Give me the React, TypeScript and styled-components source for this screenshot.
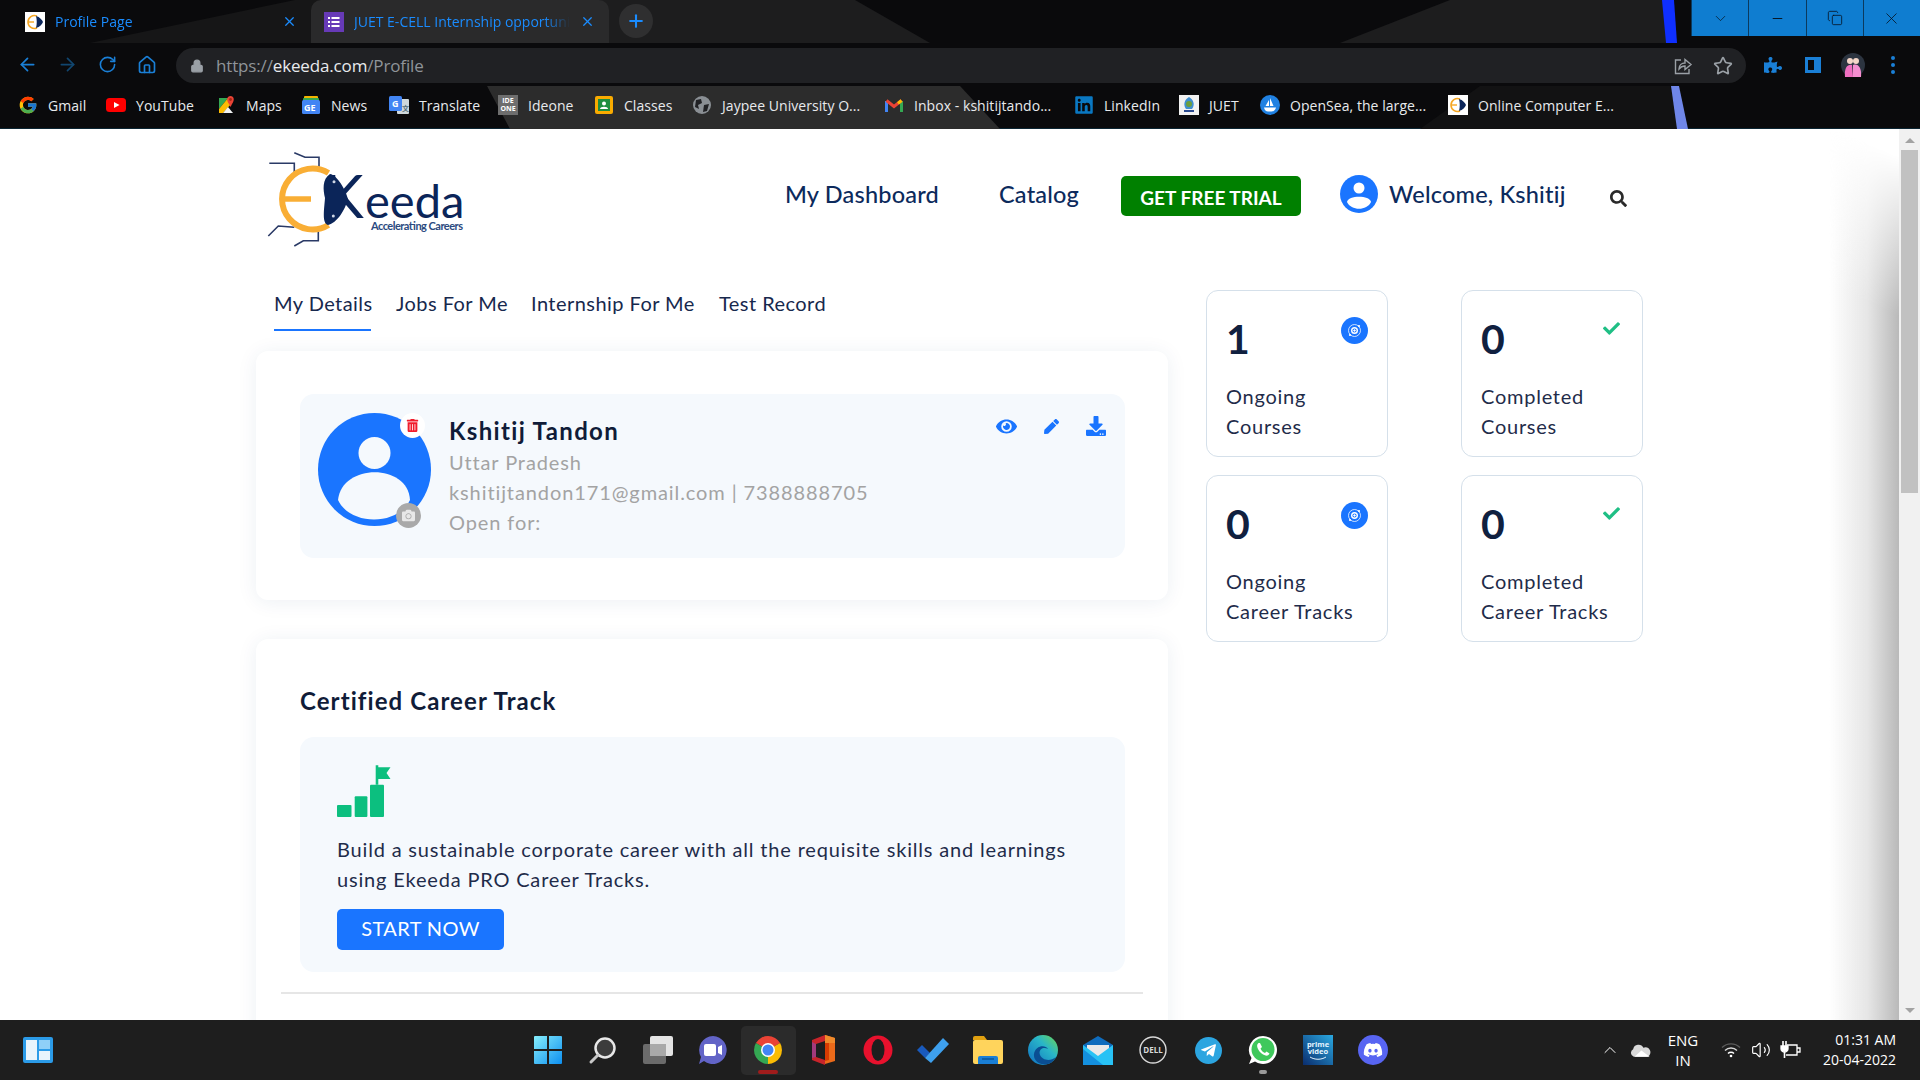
import styled, { createGlobalStyle } from "styled-components";
import {
  ArrowLeft,
  ArrowRight,
  ChevronDown,
  ChevronUp,
  Copy,
  Home,
  Lock,
  Minus,
  Plus,
  RotateCw,
  Star,
  Volume2,
  X,
} from "lucide-react";
import { FcGoogle } from "react-icons/fc";
import {
  FaCamera,
  FaCheck,
  FaDiscord,
  FaDownload,
  FaEye,
  FaLinkedin,
  FaPen,
  FaPuzzlePiece,
  FaSearch,
  FaTelegramPlane,
  FaTrashAlt,
} from "react-icons/fa";

const GlobalStyle = createGlobalStyle`
  html, body {
    margin: 0;
    padding: 0;
    overflow: hidden;
    background: #fff;
  }
  * {
    box-sizing: border-box;
  }
`;

const Screen = styled.div`
  width: 1920px;
  height: 1080px;
  display: flex;
  flex-direction: column;
  font-family: "Lato", "Open Sans", sans-serif;
  overflow: hidden;
`;

/* browser frame */

const Frame = styled.div`
  position: relative;
  height: 129px;
  flex: none;
  background: #0a0a0c;
  font-family: "Open Sans", sans-serif;
  border-bottom: 1px solid #0b2533;
`;

const Wallpaper = styled.svg`
  position: absolute;
  inset: 0;
`;

const TabStrip = styled.div`
  position: relative;
  height: 43px;
  display: flex;
  align-items: flex-start;
`;

const Tab = styled.div<{ $w: number; $pl: number; $open?: boolean }>`
  width: ${(p) => p.$w}px;
  height: 43px;
  padding-left: ${(p) => p.$pl}px;
  padding-right: 14px;
  display: flex;
  align-items: center;
  gap: 10px;
  border-radius: 10px 10px 0 0;
  background: ${(p) => (p.$open ? "#2a2a2b" : "transparent")};
  color: #1a8cff;
`;

const TabTitle = styled.span`
  flex: 1;
  font-size: 14px;
  white-space: nowrap;
  overflow: hidden;
  -webkit-mask-image: linear-gradient(to right, #000 88%, transparent);
  mask-image: linear-gradient(to right, #000 88%, transparent);
`;

const NewTab = styled.div`
  width: 34px;
  height: 34px;
  margin: 4px 0 0 10px;
  border-radius: 50%;
  background: #2f2f30;
  color: #1a8cff;
  display: flex;
  align-items: center;
  justify-content: center;
`;

const WindowButtons = styled.div`
  margin-left: auto;
  display: flex;
  height: 36px;
`;

const WindowButton = styled.div`
  width: 57.25px;
  height: 36px;
  background: #0f7dd0;
  border-left: 1px solid #0b3a5e;
  color: #06121f;
  display: flex;
  align-items: center;
  justify-content: center;
`;

const Toolbar = styled.div`
  position: relative;
  height: 43px;
  display: flex;
  align-items: center;
  color: #1a7fd6;
`;

const ToolIcon = styled.div<{ $w: number; $dim?: boolean; $ml?: number }>`
  width: ${(p) => p.$w}px;
  margin-left: ${(p) => p.$ml || 0}px;
  display: flex;
  justify-content: center;
  color: ${(p) => (p.$dim ? "#11466f" : "#1a7fd6")};
`;

const AddressBar = styled.div`
  width: 1570px;
  height: 35px;
  margin: 2px 0 0 9px;
  padding: 0 3px 0 14px;
  border-radius: 18px;
  background: #202124;
  display: flex;
  align-items: center;
  color: #9aa0a6;
`;

const UrlText = styled.span`
  margin-left: 12px;
  font-size: 17px;
  letter-spacing: -0.15px;
  color: #8f9499;
  flex: 1;
  b {
    font-weight: 400;
    color: #e8eaed;
  }
`;

const BookmarkBar = styled.div`
  position: relative;
  height: 43px;
  padding: 0 0 5px 18px;
  display: flex;
  align-items: center;
`;

const Bookmark = styled.div<{ $w: number }>`
  width: ${(p) => p.$w}px;
  display: flex;
  align-items: center;
  gap: 10px;
  color: #e8eaed;
  font-size: 14px;
  letter-spacing: 0.05px;
  white-space: nowrap;
`;

const Favicon = styled.div<{ $bg?: string }>`
  width: 20px;
  height: 20px;
  flex: none;
  display: flex;
  align-items: center;
  justify-content: center;
  background: ${(p) => p.$bg || "transparent"};
`;

const TinyLabel = styled.span`
  font-size: 7px;
  line-height: 8px;
  letter-spacing: 0;
  color: #fff;
  font-weight: 700;
  text-align: center;
  white-space: normal;
`;

/* page */

const Viewport = styled.div`
  position: relative;
  flex: 1;
  min-height: 0;
  display: flex;
`;

const Page = styled.div`
  position: relative;
  flex: 1;
  min-width: 0;
  overflow: hidden;
  background: #fff;
`;

const EdgeShade = styled.div`
  position: absolute;
  top: 0;
  right: 0;
  bottom: 0;
  width: 70px;
  pointer-events: none;
  background: linear-gradient(to left, #b9b9b9, #e6e6e6 45%, rgba(255, 255, 255, 0));
  -webkit-mask-image: linear-gradient(205deg, transparent 25px, #000 170px);
  mask-image: linear-gradient(205deg, transparent 25px, #000 170px);
`;

const ScrollTrack = styled.div`
  width: 21px;
  flex: none;
  background: #f1f1f1;
  display: flex;
  flex-direction: column;
  align-items: center;
  padding-top: 9px;
`;

const ArrowUp = styled.div`
  width: 0;
  height: 0;
  border-left: 5px solid transparent;
  border-right: 5px solid transparent;
  border-bottom: 5px solid #a3a3a3;
`;

const ArrowDown = styled(ArrowUp)`
  margin-top: auto;
  margin-bottom: 7px;
  transform: rotate(180deg);
`;

const ScrollThumb = styled.div`
  width: 17px;
  height: 343px;
  margin-top: 7px;
  background: #c1c1c1;
`;

const Header = styled.header`
  height: 161px;
  padding: 16px 0 0 262px;
  display: flex;
  align-items: flex-start;
`;

const Logo = styled.svg`
  flex: none;
  margin-right: 313px;
`;

const NavLink = styled.a<{ $w: number }>`
  width: ${(p) => p.$w}px;
  margin-top: 33px;
  flex: none;
  color: #0c2a5c;
  font-size: 23.5px;
  font-weight: 500;
  line-height: 32px;
  letter-spacing: 0.2px;
  white-space: nowrap;
`;

const TrialButton = styled.a`
  width: 180px;
  height: 40px;
  margin-top: 31px;
  padding-top: 2px;
  flex: none;
  border-radius: 5px;
  background: #008000;
  color: #fff;
  font-size: 19px;
  font-weight: 700;
  display: flex;
  align-items: center;
  justify-content: center;
`;

const UserIcon = styled.svg`
  margin: 30px 11px 0 39px;
  flex: none;
`;

const SearchIcon = styled.div`
  margin: 45px 0 0 45px;
  color: #2a2a2a;
  line-height: 0;
`;

const Columns = styled.div`
  padding-left: 256px;
  display: flex;
  gap: 38px;
  align-items: flex-start;
`;

const LeftColumn = styled.div`
  width: 912px;
  flex: none;
`;

const TabsRow = styled.div`
  height: 41px;
  margin-bottom: 20px;
  padding-left: 18px;
  display: flex;
  gap: 25px;
`;

const PageTab = styled.a<{ $active?: boolean; $w: number }>`
  width: ${(p) => p.$w}px;
  height: 41px;
  color: #17284d;
  font-size: 20px;
  line-height: 26px;
  letter-spacing: 0.45px;
  white-space: nowrap;
  border-bottom: 2px solid ${(p) => (p.$active ? "#1a75ff" : "transparent")};
`;

const Card = styled.section<{ $pt: number; $pb: number }>`
  margin-bottom: 39px;
  padding: ${(p) => p.$pt}px 43px ${(p) => p.$pb}px 44px;
  border-radius: 12px;
  background: #fff;
  box-shadow: 0 2px 20px rgba(30, 60, 110, 0.08);
`;

const Panel = styled.div`
  border-radius: 14px;
  background: #f5f9fd;
`;

const ProfilePanel = styled(Panel)`
  height: 164px;
  padding: 19px 17px 0 18px;
  display: flex;
  align-items: flex-start;
`;

const AvatarWrap = styled.div`
  position: relative;
  width: 113px;
  height: 113px;
  flex: none;
`;

const Badge = styled.div<{ $bg: string; $color: string; $bottom?: boolean }>`
  position: absolute;
  width: 25px;
  height: 25px;
  left: 82px;
  ${(p) => (p.$bottom ? "left: 78px; top: 90px;" : "top: 0;")}
  border-radius: 50%;
  background: ${(p) => p.$bg};
  color: ${(p) => p.$color};
  display: flex;
  align-items: center;
  justify-content: center;
`;

const Info = styled.div`
  margin: 4px 0 0 18px;
  flex: 1;
`;

const Name = styled.div`
  margin-bottom: 2px;
  font-size: 24px;
  line-height: 28px;
  font-weight: 700;
  color: #101c38;
  letter-spacing: 1.35px;
`;

const Muted = styled.div`
  font-size: 20px;
  line-height: 30px;
  color: #a3a3a3;
  letter-spacing: 0.9px;
`;

const Actions = styled.div`
  display: flex;
  gap: 21px;
  padding-top: 1px;
  color: #1a75ff;
`;

const ActionIcon = styled.div`
  width: 24px;
  height: 24px;
  display: flex;
  align-items: center;
  justify-content: center;
`;

const SectionTitle = styled.h2`
  margin: 0 0 22px;
  font-size: 24px;
  line-height: 28px;
  font-weight: 700;
  color: #101c38;
  letter-spacing: 1.08px;
`;

const TrackPanel = styled(Panel)`
  height: 235px;
  padding: 28px 37px 0;
`;

const TrackIcon = styled.svg`
  display: block;
  margin-bottom: 17px;
`;

const TrackText = styled.p`
  margin: 0;
  width: 760px;
  color: #1f2c4a;
  font-size: 20px;
  line-height: 30px;
  letter-spacing: 0.82px;
`;

const StartButton = styled.a`
  width: 167px;
  height: 41px;
  margin-top: 15px;
  padding-bottom: 3px;
  border-radius: 5px;
  background: #1a75ff;
  color: #fff;
  font-size: 20px;
  letter-spacing: 0.4px;
  display: flex;
  align-items: center;
  justify-content: center;
`;

const Divider = styled.hr`
  width: 862px;
  height: 2px;
  margin: 20px 0 0 -19px;
  border: 0;
  background: #e6e6e6;
`;

const StatGrid = styled.div`
  display: grid;
  grid-template-columns: 182px 182px;
  column-gap: 73px;
  row-gap: 18px;
`;

const StatCard = styled.div`
  height: 167px;
  padding: 23px 19px 0;
  border: 1px solid #d5e0ea;
  border-radius: 12px;
  background: #fff;
`;

const StatTop = styled.div`
  display: flex;
  justify-content: space-between;
  align-items: flex-start;
  height: 50px;
  margin-bottom: 17px;
`;

const StatNumber = styled.div`
  font-size: 41px;
  line-height: 50px;
  font-weight: 700;
  color: #10203f;
`;

const StatIconCircle = styled.div`
  width: 27px;
  height: 27px;
  margin: 3px 0 0 0;
  border-radius: 50%;
  background: #1a75ff;
  color: #fff;
  display: flex;
  align-items: center;
  justify-content: center;
`;

const StatCheck = styled.div`
  margin: 6px 3px 0 0;
  color: #1fbf85;
  line-height: 0;
`;

const StatLabel = styled.div`
  color: #1f2c4a;
  font-size: 20px;
  line-height: 30px;
  letter-spacing: 0.75px;
  white-space: nowrap;
`;

/* taskbar */

const Taskbar = styled.div`
  height: 60px;
  flex: none;
  background: #1e1e1e;
  display: grid;
  grid-template-columns: 1fr auto 1fr;
  align-items: center;
  color: #fff;
  font-family: "Open Sans", sans-serif;
`;

const Widgets = styled.div`
  padding-left: 23px;
  line-height: 0;
`;

const TaskIcons = styled.div`
  display: flex;
  margin-left: 1px;
`;

const TaskSlot = styled.div<{ $active?: boolean; $running?: boolean }>`
  position: relative;
  width: 55px;
  height: 49px;
  display: flex;
  align-items: center;
  justify-content: center;
  border-radius: 5px;
  background: ${(p) => (p.$active ? "#2b2b2b" : "transparent")};
  &::after {
    content: "";
    display: ${(p) => (p.$active || p.$running ? "block" : "none")};
    position: absolute;
    bottom: 1px;
    left: 50%;
    width: ${(p) => (p.$active ? 20 : 8)}px;
    height: 4px;
    margin-left: ${(p) => (p.$active ? -10 : -4)}px;
    border-radius: 2px;
    background: ${(p) => (p.$active ? "#a01c1c" : "#9a9a9a")};
  }
`;

const Tray = styled.div`
  display: flex;
  align-items: center;
  justify-content: flex-end;
  padding-right: 24px;
  font-size: 14px;
  line-height: 20px;
`;

const TrayIcon = styled.div<{ $w: number }>`
  width: ${(p) => p.$w}px;
  display: flex;
  justify-content: center;
  line-height: 0;
`;

const TrayLang = styled.div`
  width: 54px;
  margin: 0 6px 0 1px;
  font-size: 15px;
  text-align: center;
`;

const Clock = styled.div`
  width: 90px;
  text-align: right;
`;

const ProfileFavicon = () => (
  <Favicon $bg="#fff">
    <svg width="18" height="18" viewBox="0 0 18 18">
      <path d="M11 3A6.5 6.5 0 1 0 11 15" fill="none" stroke="#f5a623" strokeWidth="1.6" />
      <path d="M2 9H8" stroke="#f5a623" strokeWidth="1.4" />
      <path d="M10 3C14 4 16 7 17 9C16 11 14 14 10 15C11 11 11 7 10 3Z" fill="#0b2559" />
    </svg>
  </Favicon>
);

const FormsFavicon = () => (
  <Favicon $bg="#673ab7">
    <svg width="14" height="14" viewBox="0 0 14 14" fill="#fff">
      <rect x="1" y="2" width="2" height="2" />
      <rect x="4.5" y="2" width="8" height="2" />
      <rect x="1" y="6" width="2" height="2" />
      <rect x="4.5" y="6" width="8" height="2" />
      <rect x="1" y="10" width="2" height="2" />
      <rect x="4.5" y="10" width="8" height="2" />
    </svg>
  </Favicon>
);

const YoutubeIcon = () => (
  <svg width="20" height="14" viewBox="0 0 20 14">
    <rect width="20" height="14" rx="3.5" fill="#f00" />
    <path d="M8 4L13.5 7L8 10Z" fill="#fff" />
  </svg>
);

const GmailIcon = () => (
  <svg width="18" height="14" viewBox="0 0 18 14" fill="none" strokeWidth="3">
    <path d="M1.5 14V3" stroke="#4285f4" />
    <path d="M16.5 14V3" stroke="#34a853" />
    <path d="M1.5 2.5L9 8.5L16.5 2.5" stroke="#ea4335" />
    <path d="M16.5 2.5L13 5.3" stroke="#fbbc04" />
  </svg>
);

const MapsIcon = () => (
  <svg width="20" height="20" viewBox="0 0 20 20">
    <path d="M3 3H12L3 14Z" fill="#34a853" />
    <path d="M3 14L12 3L16 8L7 18H3Z" fill="#fbbc04" />
    <path d="M7 18L12 12L17 18Z" fill="#f1f3f4" />
    <path d="M13 9C10 5 11 1 14.5 1S19 5 16 9L14.5 12Z" fill="#ea4335" />
    <circle cx="14.5" cy="4.5" r="1.4" fill="#a52714" />
  </svg>
);

const NewsIcon = () => (
  <svg width="20" height="20" viewBox="0 0 20 20">
    <rect x="3" y="1" width="14" height="6" rx="1" fill="#f4b400" />
    <rect x="2" y="3" width="16" height="4" rx="1" fill="#34a853" />
    <rect x="1" y="5" width="18" height="14" rx="1.5" fill="#4285f4" />
    <text x="3" y="16" fontSize="9" fontWeight="700" fill="#fff" fontFamily="Open Sans">
      GE
    </text>
  </svg>
);

const TranslateIcon = () => (
  <svg width="20" height="20" viewBox="0 0 20 20">
    <rect x="8" y="4" width="12" height="15" rx="1" fill="#cfd8dc" />
    <rect x="0" y="1" width="13" height="15" rx="1.5" fill="#4285f4" />
    <text x="3" y="12" fontSize="9" fontWeight="700" fill="#fff" fontFamily="Open Sans">
      G
    </text>
    <text x="13" y="16" fontSize="7" fontWeight="700" fill="#546e7a" fontFamily="Noto Sans CJK SC">
      文
    </text>
  </svg>
);

const ClassesIcon = () => (
  <svg width="20" height="20" viewBox="0 0 20 20">
    <rect x="1" y="1" width="18" height="18" rx="2" fill="#f9ab00" />
    <rect x="4" y="4" width="12" height="12" fill="#1e8e3e" />
    <circle cx="10" cy="8.5" r="2" fill="#fff" />
    <path d="M6 14C6 11 14 11 14 14Z" fill="#fff" />
  </svg>
);

const GlobeIcon = () => (
  <svg width="20" height="20" viewBox="0 0 20 20">
    <circle cx="10" cy="10" r="9" fill="#8a8f94" />
    <path d="M4 5L9 4L10 8L6 10L7 14L3 12Z" fill="#202124" />
    <path d="M12 10L17 9L15 16L11 17Z" fill="#202124" />
  </svg>
);

const JuetIcon = () => (
  <Favicon $bg="#f2f2f2">
    <svg width="16" height="18" viewBox="0 0 16 18">
      <path d="M8 1C13 4 14 9 11 13H5C2 9 3 4 8 1Z" fill="#3f8fd0" />
      <circle cx="8" cy="8" r="3" fill="#6c9e3c" />
      <rect x="3" y="14" width="10" height="2" fill="#2a4a90" />
    </svg>
  </Favicon>
);

const OpenSeaIcon = () => (
  <svg width="20" height="20" viewBox="0 0 20 20">
    <circle cx="10" cy="10" r="10" fill="#2081e2" />
    <path d="M10 3L13.5 11H10ZM9 5V11H5.5Z" fill="#fff" />
    <path d="M4 12.5H16C15 16 13 16.5 11 16.5H8C6 16.5 4.5 15 4 12.5Z" fill="#fff" />
  </svg>
);

const ShareIcon = () => (
  <svg width="20" height="20" viewBox="0 0 20 20" fill="none" stroke="#9aa0a6" strokeWidth="1.4">
    <path d="M8 4H2.5V17.5H16V13" />
    <path d="M6 13C6 9 9 7 12 7V3.5L18 8.5L12 13.5V10C10 10 7.5 11 6 13Z" />
  </svg>
);

const SidePanelIcon = () => (
  <svg width="18" height="20" viewBox="0 0 18 20">
    <rect x="1" y="2" width="16" height="16" fill="#1a7fd6" />
    <rect x="4" y="5" width="6" height="10" fill="#0a0a0c" />
  </svg>
);

const ProfileAvatar = () => (
  <svg width="24" height="28" viewBox="0 0 24 28">
    <circle cx="12" cy="14" r="12" fill="#2c3440" />
    <path d="M4 26C3 16 7 13 11 14L12 26Z" fill="#f06fc0" />
    <path d="M12 26V14C17 12 21 17 20 26Z" fill="#f58ed0" />
    <circle cx="9" cy="10" r="3" fill="#f4d6c8" />
    <circle cx="15" cy="10" r="3" fill="#f4d6c8" />
  </svg>
);

const Kebab = () => (
  <svg width="4" height="18" viewBox="0 0 4 18" fill="#1a7fd6">
    <circle cx="2" cy="2" r="2" />
    <circle cx="2" cy="9" r="2" />
    <circle cx="2" cy="16" r="2" />
  </svg>
);

const WindowsLogo = () => (
  <svg width="30" height="30" viewBox="0 0 30 30">
    <defs>
      <linearGradient id="win" x1="0" y1="0" x2="1" y2="1">
        <stop offset="0" stopColor="#86eefc" />
        <stop offset="1" stopColor="#0d8ff0" />
      </linearGradient>
    </defs>
    <path d="M1 2A1 1 0 0 1 2 1H14V14H1ZM16 1H28A1 1 0 0 1 29 2V14H16ZM1 16H14V29H2A1 1 0 0 1 1 28ZM16 16H29V28A1 1 0 0 1 28 29H16Z" fill="url(#win)" />
  </svg>
);

const SearchGlass = () => (
  <svg width="30" height="30" viewBox="0 0 30 30">
    <circle cx="17" cy="13" r="9.5" fill="#3c3c3c" stroke="#e8e8e8" strokeWidth="2.5" />
    <path d="M10 20L3 27" stroke="#c8c8c8" strokeWidth="3" strokeLinecap="round" />
  </svg>
);

const TaskView = () => (
  <svg width="30" height="28" viewBox="0 0 30 28">
    <rect x="0" y="8" width="23" height="20" rx="2" fill="#6b6b6b" />
    <rect x="7" y="0" width="23" height="20" rx="2" fill="#e4e4e4" />
    <rect x="7" y="8" width="16" height="12" fill="#a9a9a9" />
  </svg>
);

const TeamsChat = () => (
  <svg width="30" height="30" viewBox="0 0 30 30">
    <path d="M15 1A14 14 0 1 1 6 26L1 29L3 22A14 14 0 0 1 15 1Z" fill="#6264c7" />
    <rect x="6" y="9" width="12" height="12" rx="2" fill="#fff" />
    <path d="M20 12L24 10V20L20 18Z" fill="#fff" />
  </svg>
);

const ChromeLogo = () => (
  <svg width="30" height="30" viewBox="0 0 30 30">
    <path d="M15 15L2.9 8A14 14 0 0 1 27.1 8Z" fill="#ea4335" />
    <path d="M15 15L27.1 8A14 14 0 0 1 15 29Z" fill="#fbbc04" />
    <path d="M15 15L15 29A14 14 0 0 1 2.9 8Z" fill="#34a853" />
    <circle cx="15" cy="15" r="7" fill="#fff" />
    <circle cx="15" cy="15" r="5.5" fill="#4285f4" />
  </svg>
);

const OfficeLogo = () => (
  <svg width="26" height="30" viewBox="0 0 26 30">
    <path d="M15 0L25 3V26L15 29Z" fill="#eb6a1a" />
    <path d="M15 0L25 3V8L15 8Z" fill="#f08a2b" />
    <path d="M15 0V6L6 9V22L15 25V30L2 25V5Z" fill="#c8242b" />
    <path d="M6 9L2 7V23L6 22Z" fill="#a33a7c" />
    <path d="M15 8H19V25L15 26Z" fill="#d83b01" />
  </svg>
);

const OperaLogo = () => (
  <svg width="30" height="30" viewBox="0 0 30 30">
    <circle cx="15" cy="15" r="14.5" fill="#e8112d" />
    <ellipse cx="15" cy="15" rx="6.5" ry="11" fill="#1e1e1e" />
  </svg>
);

const TodoLogo = () => (
  <svg width="32" height="26" viewBox="0 0 32 26">
    <path d="M0 13L5 8L13 16L8 21Z" fill="#195abd" />
    <path d="M8 21L26 1L32 7L14 26Z" fill="#3ea0ee" />
  </svg>
);

const FolderLogo = () => (
  <svg width="30" height="28" viewBox="0 0 30 28">
    <path d="M0 2A2 2 0 0 1 2 0H11L14 4H0Z" fill="#e0a010" />
    <rect x="0" y="4" width="30" height="24" rx="2" fill="#ffd45c" />
    <path d="M5 28V22A2 2 0 0 1 7 20H23A2 2 0 0 1 25 22V28Z" fill="#1a7fd6" />
    <rect x="9" y="22" width="12" height="2" fill="#0d5fa8" />
  </svg>
);

const EdgeLogo = () => (
  <svg width="30" height="30" viewBox="0 0 30 30">
    <defs>
      <linearGradient id="edge" x1="1" y1="0" x2="0" y2="1">
        <stop offset="0" stopColor="#6fd84f" />
        <stop offset="0.4" stopColor="#29b6c8" />
        <stop offset="1" stopColor="#0f6ec2" />
      </linearGradient>
    </defs>
    <circle cx="15" cy="15" r="15" fill="url(#edge)" />
    <path d="M28 22C22 27 14 25 12 20C10 15 15 11 20 14C17 9 7 11 6 19C5 26 13 31 20 29C24 28 26 25 28 22Z" fill="#0a4e93" />
  </svg>
);

const MailLogo = () => (
  <svg width="30" height="29" viewBox="0 0 30 29">
    <path d="M0 9L15 0L30 9V29H0Z" fill="#0f6cbd" />
    <path d="M4 9H26V16L15 22L4 16Z" fill="#e9e9e9" />
    <path d="M0 9L15 20L30 9V29H0Z" fill="#28c2f5" />
    <path d="M0 29V13L20 29Z" fill="#1490df" />
  </svg>
);

const DellLogo = () => (
  <svg width="28" height="28" viewBox="0 0 28 28">
    <circle cx="14" cy="14" r="13" fill="none" stroke="#d8d8d8" strokeWidth="1.4" />
    <text x="14" y="17" fontSize="8" fontWeight="700" fill="#d8d8d8" textAnchor="middle" fontFamily="Open Sans">
      DELL
    </text>
  </svg>
);

const PrimeLogo = () => (
  <svg width="30" height="30" viewBox="0 0 30 30">
    <defs>
      <linearGradient id="prime" x1="1" y1="0" x2="0" y2="1">
        <stop offset="0" stopColor="#2aa8e0" />
        <stop offset="1" stopColor="#0a2d6e" />
      </linearGradient>
    </defs>
    <rect width="30" height="30" fill="url(#prime)" />
    <text x="15" y="12" fontSize="7.5" fontWeight="700" fill="#e4f4ff" textAnchor="middle" fontFamily="Open Sans">
      prime
    </text>
    <text x="15" y="19" fontSize="7.5" fontWeight="700" fill="#e4f4ff" textAnchor="middle" fontFamily="Open Sans">
      video
    </text>
    <path d="M7 22C12 25 18 25 23 22" fill="none" stroke="#e4f4ff" strokeWidth="1" />
  </svg>
);

const RoundIcon = styled.div<{ $bg: string }>`
  width: 27px;
  height: 27px;
  border-radius: 50%;
  background: ${(p) => p.$bg};
  color: #fff;
  display: flex;
  align-items: center;
  justify-content: center;
`;

const DiscordRound = styled(RoundIcon)`
  width: 30px;
  height: 30px;
`;

const WhatsappLogo = () => (
  <svg width="30" height="30" viewBox="0 0 30 30">
    <path d="M15 1A14 14 0 1 1 7 26.5L1 29L3.5 23A14 14 0 0 1 15 1Z" fill="#fff" />
    <circle cx="15" cy="14.5" r="11.5" fill="#3fc85c" />
    <path d="M10.5 8C9 9 8.5 11 10 14C11.5 17 14 19.5 17.5 20.5C19.5 21 21 20 21.5 18.5L18.5 16.5L17 18C15 17.5 13 15 12.5 13.5L14 12L12 8Z" fill="#fff" />
  </svg>
);

const OneDriveIcon = () => (
  <svg width="22" height="13" viewBox="0 0 32 18">
    <path d="M7 18A6 6 0 0 1 6 7A8 8 0 0 1 21 5A6.5 6.5 0 0 1 27 18Z" fill="#d9d9d9" />
    <path d="M8 18L18 9L30 18Z" fill="#fff" />
  </svg>
);

const WifiIcon = () => (
  <svg width="20" height="16" viewBox="0 0 20 16" fill="none" strokeWidth="1.4">
    <path d="M1 5.5A13 13 0 0 1 19 5.5" stroke="#5c5c5c" />
    <path d="M4 8.5A8.500 8.500 0 0 1 16 8.5" stroke="#d8d8d8" />
    <path d="M7 11.5A4.200 4.200 0 0 1 13 11.5" stroke="#fff" />
    <circle cx="10" cy="14" r="1.3" fill="#fff" />
  </svg>
);

const BatteryIcon = () => (
  <svg width="22" height="20" viewBox="0 0 22 20" fill="none" stroke="#fff" strokeWidth="1.3">
    <path d="M7 5H17V15H6" />
    <path d="M17 8H20V12H17" />
    <path d="M1 6H8V9C8 11 6 12 4.5 12C3 12 1 11 1 9Z" fill="#fff" />
    <path d="M3 1V6M6 1V6M4.5 12V18" strokeWidth="1.6" />
  </svg>
);

const StatTarget = () => (
  <svg width="17" height="17" viewBox="0 0 17 17" fill="none" stroke="#fff">
    <circle cx="8.5" cy="8.5" r="6" strokeWidth="1" opacity="0.75" />
    <circle cx="8.5" cy="8.5" r="2.8" strokeWidth="1.4" />
    <circle cx="8.5" cy="8.5" r="0.8" fill="#fff" />
    <circle cx="13" cy="4" r="1.1" fill="#fff" stroke="none" />
    <circle cx="4" cy="13" r="1.1" fill="#fff" stroke="none" />
  </svg>
);

const stats = [
  { value: "1", label: ["Ongoing", "Courses"], done: false },
  { value: "0", label: ["Completed", "Courses"], done: true },
  { value: "0", label: ["Ongoing", "Career Tracks"], done: false },
  { value: "0", label: ["Completed", "Career Tracks"], done: true },
];

const bookmarks = [
  { w: 88, name: "Gmail", icon: <FcGoogle size={20} /> },
  { w: 110, name: "YouTube", icon: <YoutubeIcon /> },
  { w: 85, name: "Maps", icon: <MapsIcon /> },
  { w: 88, name: "News", icon: <NewsIcon /> },
  { w: 109, name: "Translate", icon: <TranslateIcon /> },
  { w: 96, name: "Ideone", icon: <Favicon $bg="#6e6e6e"><TinyLabel>IDE ONE</TinyLabel></Favicon> },
  { w: 98, name: "Classes", icon: <ClassesIcon /> },
  { w: 192, name: "Jaypee University O...", icon: <GlobeIcon /> },
  { w: 190, name: "Inbox - kshitijtando...", icon: <GmailIcon /> },
  { w: 105, name: "LinkedIn", icon: <FaLinkedin size={20} color="#0a78c2" /> },
  { w: 81, name: "JUET", icon: <JuetIcon /> },
  { w: 188, name: "OpenSea, the large...", icon: <OpenSeaIcon /> },
  { w: 170, name: "Online Computer E...", icon: <ProfileFavicon /> },
];

const taskIcons = [
  <WindowsLogo key="win" />,
  <SearchGlass key="search" />,
  <TaskView key="view" />,
  <TeamsChat key="teams" />,
  <ChromeLogo key="chrome" />,
  <OfficeLogo key="office" />,
  <OperaLogo key="opera" />,
  <TodoLogo key="todo" />,
  <FolderLogo key="files" />,
  <EdgeLogo key="edge" />,
  <MailLogo key="mail" />,
  <DellLogo key="dell" />,
  <RoundIcon key="telegram" $bg="#2ca5e0"><FaTelegramPlane size={17} /></RoundIcon>,
  <WhatsappLogo key="whatsapp" />,
  <PrimeLogo key="prime" />,
  <DiscordRound key="discord" $bg="#5865f2"><FaDiscord size={20} /></DiscordRound>,
];

const App = () => {
  return (
    <Screen>
      <GlobalStyle />
      <Frame>
        <Wallpaper width="1920" height="129" viewBox="0 0 1920 129">
          <polygon points="90,43 295,0 470,0 520,43" fill="#161617" />
          <polygon points="471,0 855,0 930,43 500,43" fill="#1d1d1e" />
          <polygon points="487,86 960,86 1000,129 510,129" fill="#2c2c2c" />
          <polygon points="1450,0 1665,0 1675,43 1340,43" fill="#1d1d1e" />
          <polygon points="1480,86 1670,86 1680,129 1420,129" fill="#121213" />
          <polygon points="1662,0 1674,0 1677,43 1666,43" fill="#0f2fff" />
          <polygon points="1671,86 1679,86 1688,129 1677,129" fill="#6f86e8" />
        </Wallpaper>
        <TabStrip>
          <Tab $w={311} $pl={25}>
            <ProfileFavicon />
            <TabTitle>Profile Page</TabTitle>
            <X size={15} />
          </Tab>
          <Tab $w={298} $pl={13} $open>
            <FormsFavicon />
            <TabTitle>JUET E-CELL Internship opportunities</TabTitle>
            <X size={15} />
          </Tab>
          <NewTab>
            <Plus size={20} strokeWidth={2.5} />
          </NewTab>
          <WindowButtons>
            <WindowButton><ChevronDown size={17} strokeWidth={1} /></WindowButton>
            <WindowButton><Minus size={15} strokeWidth={1.5} /></WindowButton>
            <WindowButton><Copy size={16} strokeWidth={1.2} /></WindowButton>
            <WindowButton><X size={19} strokeWidth={1} /></WindowButton>
          </WindowButtons>
        </TabStrip>
        <Toolbar>
          <ToolIcon $w={40} $ml={7}><ArrowLeft size={21} /></ToolIcon>
          <ToolIcon $w={40} $dim><ArrowRight size={21} /></ToolIcon>
          <ToolIcon $w={40}><RotateCw size={19} /></ToolIcon>
          <ToolIcon $w={40}><Home size={20} /></ToolIcon>
          <AddressBar>
            <Lock size={14} fill="#9aa0a6" />
            <UrlText>https://<b>ekeeda.com</b>/Profile</UrlText>
            <ToolIcon $w={40}><ShareIcon /></ToolIcon>
            <ToolIcon $w={40}><Star size={20} color="#9aa0a6" /></ToolIcon>
          </AddressBar>
          <ToolIcon $w={40} $ml={7}><FaPuzzlePiece size={18} /></ToolIcon>
          <ToolIcon $w={40}><SidePanelIcon /></ToolIcon>
          <ToolIcon $w={40}><ProfileAvatar /></ToolIcon>
          <ToolIcon $w={40}><Kebab /></ToolIcon>
        </Toolbar>
        <BookmarkBar>
          {bookmarks.map((b) => (
            <Bookmark key={b.name} $w={b.w}>
              <Favicon>{b.icon}</Favicon>
              <span>{b.name}</span>
            </Bookmark>
          ))}
        </BookmarkBar>
      </Frame>

      <Viewport>
        <Page>
          <Header>
            <Logo width="210" height="110" viewBox="0 0 210 110">
              <g fill="none" stroke="#2a3a66" strokeWidth="1.6">
                <path d="M32.3 7.7L43 12.3H57V21.7" />
                <path d="M7.3 18.3H32.3V27.7" />
                <path d="M6.3 91L16.3 81L32.3 82.3" />
                <path d="M32.3 101L41.3 95.7H56.3V86.7" />
              </g>
              <path d="M66.5 28A30.5 30.5 0 1 0 66.5 80" fill="none" stroke="#f9ae35" strokeWidth="6" />
              <path d="M23 54H49" stroke="#f9ae35" strokeWidth="5.5" />
              <text y="72.5" fontFamily="Lato" fill="#0b2559">
                <tspan x="62" fontSize="60">K</tspan>
                <tspan x="103" fontSize="47">eeda</tspan>
              </text>
              <path d="M68 29C75 30 84 45 86 54C83 65 75 78 66 80C60 78 62 66 63 53C61 45 60 34 68 29Z" fill="#0b2559" />
              <circle cx="72" cy="36.7" r="1.5" fill="#cfd6e4" />
              <circle cx="71.3" cy="71" r="1.5" fill="#cfd6e4" />
              <text x="109" y="85" fontSize="11" fontWeight="700" fontFamily="Lato" fill="#2b4a80" textLength="92">
                Accelerating Careers
              </text>
            </Logo>
            <NavLink $w={214}>My Dashboard</NavLink>
            <NavLink $w={122}>Catalog</NavLink>
            <TrialButton>GET FREE TRIAL</TrialButton>
            <UserIcon width="38" height="38" viewBox="0 0 38 38">
              <circle cx="19" cy="19" r="19" fill="#1a75ff" />
              <circle cx="19" cy="13" r="5.5" fill="#fff" />
              <path d="M7 27C8 20 30 20 31 27C27 36 11 36 7 27Z" fill="#fff" />
            </UserIcon>
            <NavLink $w={176}>Welcome, Kshitij</NavLink>
            <SearchIcon><FaSearch size={17} /></SearchIcon>
          </Header>

          <Columns>
            <LeftColumn>
              <TabsRow>
                <PageTab $w={97} $active>My Details</PageTab>
                <PageTab $w={110}>Jobs For Me</PageTab>
                <PageTab $w={163}>Internship For Me</PageTab>
                <PageTab $w={110}>Test Record</PageTab>
              </TabsRow>

              <Card $pt={43} $pb={42}>
                <ProfilePanel>
                  <AvatarWrap>
                    <svg width="113" height="113" viewBox="0 0 113 113">
                      <circle cx="56.5" cy="56.5" r="56.5" fill="#1a75ff" />
                      <circle cx="56.5" cy="40" r="16" fill="#f5f9fd" />
                      <path d="M20 87C24 50 90 50 92 87C80 113 32 113 20 87Z" fill="#f5f9fd" />
                    </svg>
                    <Badge $bg="#fff" $color="#f01c2c"><FaTrashAlt size={13} /></Badge>
                    <Badge $bg="#a9a9a9" $color="#e8e8e8" $bottom><FaCamera size={13} /></Badge>
                  </AvatarWrap>
                  <Info>
                    <Name>Kshitij Tandon</Name>
                    <Muted>Uttar Pradesh</Muted>
                    <Muted>kshitijtandon171@gmail.com | 7388888705</Muted>
                    <Muted>Open for:</Muted>
                  </Info>
                  <Actions>
                    <ActionIcon><FaEye size={21} /></ActionIcon>
                    <ActionIcon><FaPen size={15} /></ActionIcon>
                    <ActionIcon><FaDownload size={20} /></ActionIcon>
                  </Actions>
                </ProfilePanel>
              </Card>

              <Card $pt={48} $pb={120}>
                <SectionTitle>Certified Career Track</SectionTitle>
                <TrackPanel>
                  <TrackIcon width="54" height="52" viewBox="0 0 54 52" fill="#0cbf7f">
                    <rect x="0" y="40" width="14.5" height="12" rx="1" />
                    <rect x="17.7" y="31.3" width="12.7" height="20.7" rx="1" />
                    <rect x="33" y="19.7" width="14" height="32.3" rx="1" />
                    <path d="M38.7 0.3H41.3V2.3H53.5L49.5 8L53.5 14H41.3V19.7H38.7Z" />
                  </TrackIcon>
                  <TrackText>
                    Build a sustainable corporate career with all the requisite skills and learnings using Ekeeda PRO Career Tracks.
                  </TrackText>
                  <StartButton>START NOW</StartButton>
                </TrackPanel>
                <Divider />
              </Card>
            </LeftColumn>

            <StatGrid>
              {stats.map((s) => (
                <StatCard key={s.label.join(" ")}>
                  <StatTop>
                    <StatNumber>{s.value}</StatNumber>
                    {s.done ? (
                      <StatCheck><FaCheck size={17} /></StatCheck>
                    ) : (
                      <StatIconCircle><StatTarget /></StatIconCircle>
                    )}
                  </StatTop>
                  <StatLabel>{s.label[0]}</StatLabel>
                  <StatLabel>{s.label[1]}</StatLabel>
                </StatCard>
              ))}
            </StatGrid>
          </Columns>
          <EdgeShade />
        </Page>
        <ScrollTrack>
          <ArrowUp />
          <ScrollThumb />
          <ArrowDown />
        </ScrollTrack>
      </Viewport>

      <Taskbar>
        <Widgets>
          <svg width="30" height="26" viewBox="0 0 30 26">
            <rect width="30" height="26" rx="2" fill="#2b9be8" />
            <rect x="3" y="3" width="11" height="20" fill="#e8f4fc" />
            <rect x="16" y="3" width="11" height="9" fill="#8fd0f8" />
            <rect x="16" y="14" width="11" height="9" fill="#e8f4fc" />
          </svg>
        </Widgets>
        <TaskIcons>
          {taskIcons.map((icon, i) => (
            <TaskSlot key={i} $active={i === 4} $running={i === 13}>
              {icon}
            </TaskSlot>
          ))}
        </TaskIcons>
        <Tray>
          <TrayIcon $w={30}><ChevronUp size={20} strokeWidth={1.2} /></TrayIcon>
          <TrayIcon $w={30}><OneDriveIcon /></TrayIcon>
          <TrayLang>ENG<br />IN</TrayLang>
          <TrayIcon $w={30}><WifiIcon /></TrayIcon>
          <TrayIcon $w={30}><Volume2 size={20} strokeWidth={1.4} /></TrayIcon>
          <TrayIcon $w={30}><BatteryIcon /></TrayIcon>
          <Clock>01:31 AM<br />20-04-2022</Clock>
        </Tray>
      </Taskbar>
    </Screen>
  );
};

export default App;
